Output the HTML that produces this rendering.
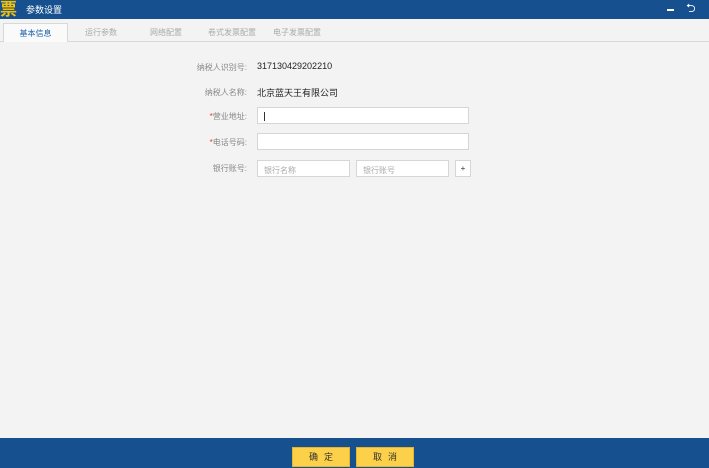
<!DOCTYPE html>
<html><head><meta charset="utf-8"><style>
*{margin:0;padding:0;box-sizing:border-box}
body{width:709px;height:468px;background:#f3f3f3;font-family:"Liberation Sans","Noto Sans CJK SC",sans-serif;position:relative;overflow:hidden;font-size:8px;color:#333}
.top{position:absolute;left:0;top:0;width:709px;height:19px;background:#17508f}
.logo{position:absolute;left:0;top:0;width:18px;height:19px;color:#f5c000;font-size:17px;font-weight:bold;line-height:19px}
.title{position:absolute;left:26px;top:3px;color:#fff;font-size:9px}
.tabs{position:absolute;top:19px;left:0;width:709px;height:23px;border-bottom:1px solid #d8d8d8;background:#f3f3f3}
.tab{position:absolute;top:8px;font-size:8px;color:#aaa}
.act{position:absolute;left:3px;top:4px;width:65px;height:19px;background:#fafafa;border:1px solid #d8d8d8;border-bottom:none;color:#1a5fa6;text-align:center;line-height:20px}
.lbl{position:absolute;right:462px;color:#888;font-size:8px;white-space:nowrap}
.lbl b{color:#e33;font-weight:normal}
.val{position:absolute;left:257px;font-size:9px;color:#222}
.in{position:absolute;height:17px;background:#fff;border:1px solid #d6d6d6;font-size:8px;color:#aaa;padding:4px 6px}
.bot{position:absolute;left:0;top:438px;width:709px;height:30px;background:#17508f}
.btn{position:absolute;top:447px;width:58px;height:20px;background:#fcd048;border:1px solid #e6b52a;text-align:center;line-height:18px;font-size:9px;color:#333;letter-spacing:6px;text-indent:6px}
</style></head><body>
<div class="top"><div class="logo">票</div><div class="title">参数设置</div>
<div style="position:absolute;left:667px;top:9px;width:7px;height:1.5px;background:#fff"></div>
<div style="position:absolute;left:686px;top:1px;color:#fff;font-size:12px;line-height:14px">⮌</div></div>
<div class="tabs">
<div class="act">基本信息</div>
<div class="tab" style="left:85px">运行参数</div>
<div class="tab" style="left:150px">网络配置</div>
<div class="tab" style="left:208px">卷式发票配置</div>
<div class="tab" style="left:273px">电子发票配置</div>
</div>
<div class="lbl" style="top:62px">纳税人识别号:</div><div class="val" style="top:61px">317130429202210</div>
<div class="lbl" style="top:87px">纳税人名称:</div><div class="val" style="top:86px">北京蓝天王有限公司</div>
<div class="lbl" style="top:111px"><b>*</b>营业地址:</div><div class="in" style="left:257px;top:107px;width:212px"><span style="display:inline-block;width:1px;height:9px;background:#333"></span></div>
<div class="lbl" style="top:137px"><b>*</b>电话号码:</div><div class="in" style="left:257px;top:133px;width:212px"></div>
<div class="lbl" style="top:163px">银行账号:</div>
<div class="in" style="left:257px;top:160px;width:93px">银行名称</div>
<div class="in" style="left:356px;top:160px;width:93px">银行账号</div>
<div class="in" style="left:455px;top:160px;width:16px;padding:0;text-align:center;line-height:15px;color:#333">+</div>
<div class="bot"></div>
<div class="btn" style="left:292px">确定</div>
<div class="btn" style="left:356px">取消</div>
</body></html>
